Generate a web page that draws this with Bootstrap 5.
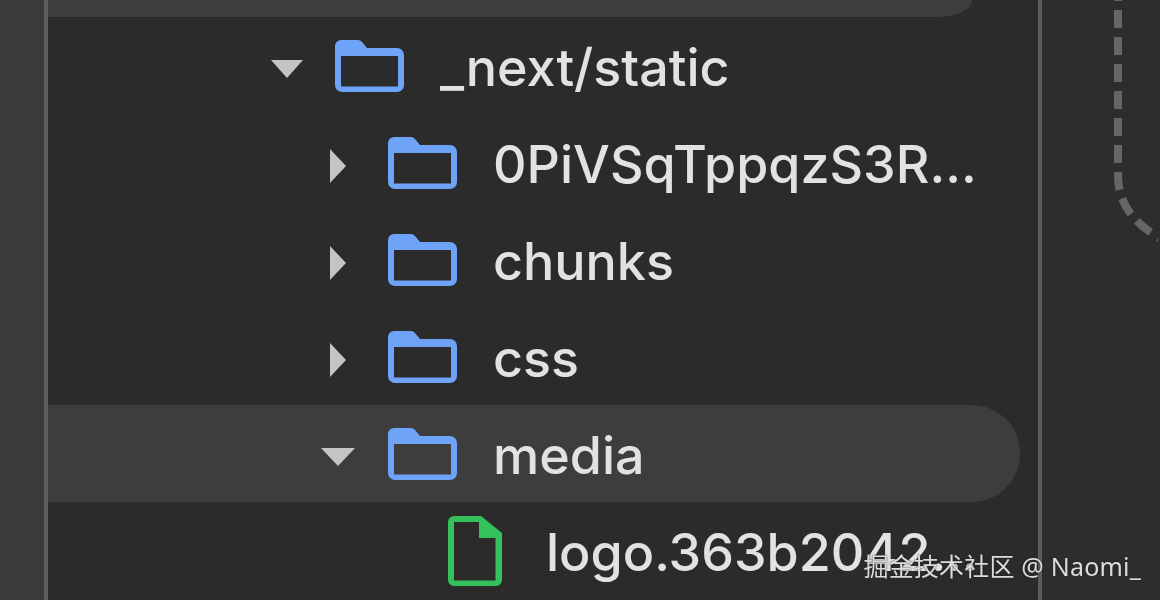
<!DOCTYPE html>
<html lang="en">

<head>
    <meta charset="UTF-8" />
    <meta name="viewport" content="width=device-width, initial-scale=1.0" />
    <title>File tree</title>
    <link href="https://cdn.jsdelivr.net/npm/bootstrap@5.3.2/dist/css/bootstrap.min.css" rel="stylesheet">
    <style>
        html, body { height: 600px; overflow: hidden; background: #2b2b2b; }
        .shell { width: 1160px; height: 600px; position: relative; filter: blur(0.5px); }
        .side-strip { width: 44px; background: #3b3b3b; flex: none; }
        .tree-panel { width: 998px; flex: none; background: #2b2b2b; border-left: 4px solid #5f5f5f; border-right: 4px solid #5c5c5c; }
        .right-pane { flex: 1; background: #2d2d2d; }
        .top-stub { height: 17px; width: 924px; background: #3d3d3d; border-bottom-right-radius: 34px 17px; }
        .tree-row { height: 97px; width: 972px; color: #e2e2e2; font-family: Inter, "Liberation Sans", sans-serif; font-size: 52px; font-weight: 500; white-space: nowrap; }
        .tree-row > span:last-child { padding-top: 4px; }
        .tree-row.active { background: #3d3d3d; border-radius: 0 48px 48px 0; }
        .depth-1 { padding-left: 222px; }
        .depth-2 { padding-left: 272px; }
        .depth-3 { padding-left: 400px; }
        .caret-box { width: 36px; flex: none; display: flex; justify-content: center; padding-top: 6px; }
        .depth-1 .caret-box { width: 34px; }
        .ico-folder { width: 70px; height: 54px; flex: none; }
        .ico-file { width: 54px; height: 70px; flex: none; margin-right: 44px; }
        .depth-1 .ico-folder { margin-left: 30px; margin-right: 36px; }
        .depth-2 .ico-folder { margin-left: 31px; margin-right: 36px; }
        .dash-line { display: block; }
        .wm-tag { position: absolute; right: 19px; bottom: 19px; font-family: "Noto Sans", "Noto Sans CJK SC", sans-serif; font-size: 25px; letter-spacing: .2px; line-height: 1.2; color: #dcdcdc; text-shadow: 0 0 2px #222; white-space: nowrap; }
    </style>
</head>

<body>
    <div class="shell d-flex">
        <div class="side-strip"></div>

        <div class="tree-panel">
            <div class="top-stub"></div>

            <div class="tree-row depth-1 d-flex align-items-center">
                <span class="caret-box"><svg width="34" height="20" viewBox="0 0 34 20"><path d="M1 1H33L17 19Z" fill="#c4c4c4"/></svg></span>
                <svg class="ico-folder" viewBox="0 0 70 54"><use href="#folder"/></svg>
                <span>_next/static</span>
            </div>

            <div class="tree-row depth-2 d-flex align-items-center">
                <span class="caret-box"><svg width="18" height="36" viewBox="0 0 18 36"><path d="M1 1L17 18L1 35Z" fill="#c4c4c4"/></svg></span>
                <svg class="ico-folder" viewBox="0 0 70 54"><use href="#folder"/></svg>
                <span>0PiVSqTppqzS3R...</span>
            </div>

            <div class="tree-row depth-2 d-flex align-items-center">
                <span class="caret-box"><svg width="18" height="36" viewBox="0 0 18 36"><path d="M1 1L17 18L1 35Z" fill="#c4c4c4"/></svg></span>
                <svg class="ico-folder" viewBox="0 0 70 54"><use href="#folder"/></svg>
                <span>chunks</span>
            </div>

            <div class="tree-row depth-2 d-flex align-items-center">
                <span class="caret-box"><svg width="18" height="36" viewBox="0 0 18 36"><path d="M1 1L17 18L1 35Z" fill="#c4c4c4"/></svg></span>
                <svg class="ico-folder" viewBox="0 0 70 54"><use href="#folder"/></svg>
                <span>css</span>
            </div>

            <div class="tree-row active depth-2 d-flex align-items-center">
                <span class="caret-box"><svg width="36" height="20" viewBox="0 0 36 20"><path d="M1 1H35L18 19Z" fill="#c4c4c4"/></svg></span>
                <svg class="ico-folder" viewBox="0 0 70 54"><use href="#folder"/></svg>
                <span>media</span>
            </div>

            <div class="tree-row depth-3 d-flex align-items-center">
                <svg class="ico-file" viewBox="0 0 54 70">
                    <path fill-rule="evenodd" d="M6 0H33L54 17V64A6 6 0 0 1 48 70H6A6 6 0 0 1 0 64V6A6 6 0 0 1 6 0ZM6 6V64.500H47.500V22H31V6Z" fill="#34c15c"/>
                </svg>
                <span>logo.363b2042...</span>
            </div>
        </div>

        <div class="right-pane">
            <svg class="dash-line" width="116" height="600" viewBox="0 0 116 600">
                <path d="M76 -17V175Q76 215 118 238" fill="none" stroke="#666" stroke-width="8" stroke-dasharray="18 9"/>
            </svg>
        </div>

        <div class="wm-tag">掘金技术社区 @ Naomi_</div>
    </div>

    <svg width="0" height="0" class="position-absolute">
        <defs>
            <g id="folder">
                <path fill-rule="evenodd" d="M7 1H24A5 5 0 0 1 28 3L33 9H63A7 7 0 0 1 70 16V46A7 7 0 0 1 63 53H8A7 7 0 0 1 1 46V7A6 6 0 0 1 7 1ZM7 17V47.500H64V17Z" fill="#6ea3f7"/>
            </g>
        </defs>
    </svg>

    <script src="https://cdn.jsdelivr.net/npm/bootstrap@5.3.2/dist/js/bootstrap.bundle.min.js"></script>
</body>

</html>
